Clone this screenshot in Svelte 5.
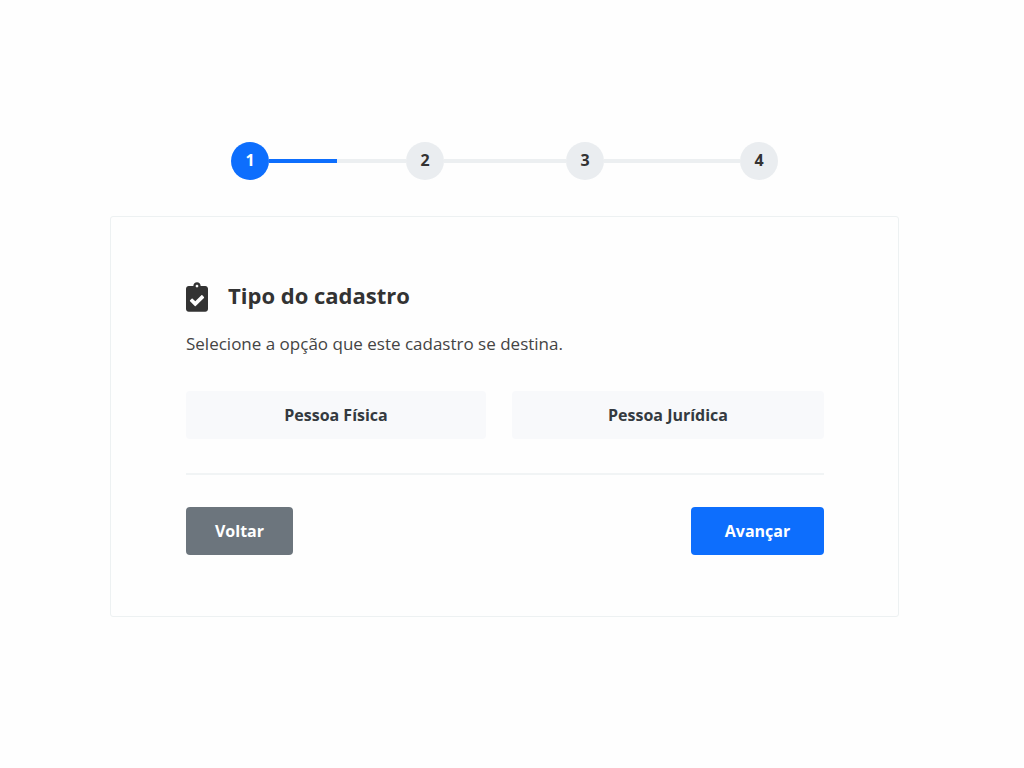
<script lang="ts">
  let currentStep = 1;

  const steps = [
    { id: 1, grow: 138, progress: 50 },
    { id: 2, grow: 123, progress: 0 },
    { id: 3, grow: 137, progress: 0 },
    { id: 4, grow: 0, progress: 0 }
  ];

  const options = [
    { id: 'fisica', label: 'Pessoa Física' },
    { id: 'juridica', label: 'Pessoa Jurídica' }
  ];
</script>

<main class="page">
  <div class="stepper">
    {#each steps as step, i (step.id)}
      <div class="step" class:active={step.id === currentStep}>{step.id}</div>
      {#if i < steps.length - 1}
        <div class="line" style="flex-grow: {step.grow}">
          <div class="line-fill" style="width: {step.progress}%"></div>
        </div>
      {/if}
    {/each}
  </div>

  <section class="card">
    <div class="title">
      <svg class="title-icon" viewBox="0 0 384 512" aria-hidden="true">
        <path
          fill="currentColor"
          d="M336 64h-80c0-35.3-28.7-64-64-64s-64 28.7-64 64H48C21.5 64 0 85.5 0 112v352c0 26.5 21.5 48 48 48h288c26.5 0 48-21.5 48-48V112c0-26.5-21.5-48-48-48zM192 40c13.3 0 24 10.7 24 24s-10.7 24-24 24-24-10.7-24-24 10.7-24 24-24zm121.2 231.8l-143 141.8c-4.7 4.7-12.3 4.6-17-.1l-82.6-83.3c-4.7-4.7-4.6-12.3.1-17L99.1 285c4.7-4.7 12.3-4.6 17 .1l46 46.4 106-105.2c4.7-4.7 12.3-4.6 17 .1l28.2 28.4c4.7 4.8 4.6 12.3-.1 17z"
        />
      </svg>
      <h1>Tipo do cadastro</h1>
    </div>
    <p class="description">Selecione a opção que este cadastro se destina.</p>

    <div class="options">
      {#each options as option (option.id)}
        <button type="button" class="btn btn-light">{option.label}</button>
      {/each}
    </div>

    <hr />

    <div class="actions">
      <button type="button" class="btn btn-secondary">Voltar</button>
      <button type="button" class="btn btn-primary">Avançar</button>
    </div>
  </section>
</main>

<style>
  :global(body) {
    background: #fefefe;
  }

  .page {
    padding: 142px 125px 40px 110px;
    font-family: 'Open Sans', 'Noto Sans', sans-serif;
    color: #333;
  }

  .stepper {
    display: flex;
    align-items: center;
    margin: 0 121px 36px;
  }

  .step {
    flex: none;
    width: 38px;
    height: 38px;
    border-radius: 50%;
    background: #eaedf0;
    font-size: 16px;
    line-height: 36px;
    font-weight: 700;
    text-align: center;
  }

  .step.active {
    background: #0d6efd;
    color: #fff;
  }

  .line {
    flex: 1 1 0;
    height: 4px;
    background: #eceff1;
  }

  .line-fill {
    height: 100%;
    background: #0d6efd;
  }

  .card {
    padding: 64px 74px 61px 75px;
    border: 1px solid #edf1f2;
    border-radius: 3px;
    background: #fefefe;
  }

  .title {
    display: flex;
    align-items: center;
    gap: 20px;
  }

  .title-icon {
    width: 22px;
    height: 30px;
  }

  h1 {
    margin: 0;
    padding-bottom: 4px;
    font-size: 22px;
    line-height: 28px;
    font-weight: 700;
  }

  .description {
    margin: 18px 0 34px;
    font-size: 17px;
    line-height: 26px;
    color: #444;
  }

  .options {
    display: grid;
    grid-template-columns: 25fr 26fr;
    gap: 26px;
  }

  .btn {
    height: 48px;
    padding: 0 24px;
    border: none;
    border-radius: 4px;
    font-family: inherit;
    font-size: 16px;
    font-weight: 700;
    cursor: pointer;
  }

  .btn-light {
    background: #f8f9fb;
    color: #343a40;
  }

  hr {
    margin: 34px 0 32px;
    border: none;
    border-top: 2px solid #f1f4f5;
  }

  .actions {
    display: flex;
    justify-content: space-between;
  }

  .btn-secondary {
    min-width: 107px;
    background: #6c757d;
    color: #fff;
  }

  .btn-primary {
    min-width: 133px;
    background: #0d6efd;
    color: #fff;
  }
</style>
